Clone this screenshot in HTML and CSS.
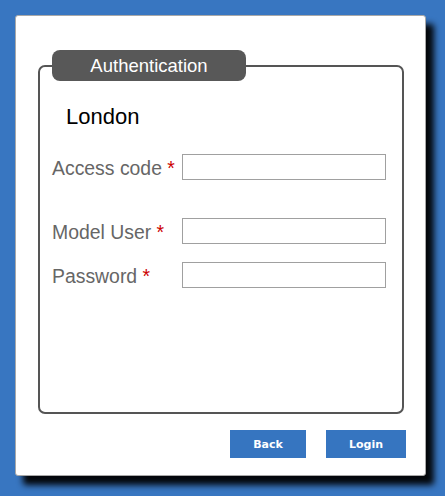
FILE: index.html
```html
<!DOCTYPE html>
<html lang="en">
<head>
<meta charset="utf-8">
<title>Authentication</title>
<link rel="stylesheet" href="styles.css">
</head>
<body>
<div class="card">
  <fieldset class="auth">
    <legend class="auth-title"><span class="auth-title-text">Authentication</span></legend>
    <div class="city">London</div>
    <div class="row row-code">
      <label class="label">Access code <span class="req">*</span></label>
      <input class="field" type="text">
    </div>
    <div class="row row-user">
      <label class="label">Model User <span class="req">*</span></label>
      <input class="field" type="text">
    </div>
    <div class="row">
      <label class="label">Password <span class="req">*</span></label>
      <input class="field" type="password">
    </div>
  </fieldset>
  <div class="actions">
    <button class="btn btn-back" type="button">Back</button>
    <button class="btn btn-login" type="button">Login</button>
  </div>
</div>
</body>
</html>
```

FILE: styles.css
```css
html, body {
  margin: 0;
  height: 100%;
}
body {
  background: #3876c1;
  padding: 15px;
  box-sizing: border-box;
  font-family: "Liberation Sans", Arial, sans-serif;
}
.card {
  width: 411px;
  height: 461px;
  box-sizing: border-box;
  background: #fff;
  border: 1px solid #a8a8a8;
  border-radius: 3px;
  box-shadow: 8px 9px 6px rgba(0, 0, 0, 0.95);
  padding: 34px 19px 0 22px;
  display: flex;
  flex-direction: column;
}
.auth {
  margin: 0;
  width: 366px;
  height: 364px;
  box-sizing: border-box;
  border: 2px solid #555;
  border-radius: 7px;
  padding: 0 16px 0 12px;
  min-inline-size: 0;
}
.auth-title {
  width: 194px;
  height: 31px;
  box-sizing: border-box;
  padding: 0;
  background: #585858;
  color: #fff;
  border-radius: 8px;
  font-size: 18.5px;
  line-height: 31px;
  text-align: left;
}
.auth-title-text {
  display: block;
  text-align: center;
}
.city {
  font-size: 22px;
  line-height: 26px;
  color: #000;
  margin: 23px 0 24px 14px;
}
.row {
  display: flex;
  align-items: center;
  height: 26px;
}
.row-code {
  margin-bottom: 38px;
}
.row-user {
  margin-bottom: 18px;
}
.label {
  width: 130px;
  flex: none;
  font-size: 19.4px;
  color: #666;
  padding-top: 2px;
}
.req {
  color: #c00;
}
.field {
  width: 204px;
  height: 26px;
  box-sizing: border-box;
  margin: 0;
  padding: 0 4px;
  border: 1px solid #a0a0a0;
  border-radius: 0;
  background: #fff;
  outline: none;
}
.actions {
  display: flex;
  justify-content: flex-end;
  gap: 20px;
  margin-top: 16px;
}
.btn {
  height: 28px;
  padding: 0;
  border: none;
  background: #3675c0;
  color: #fff;
  font-family: "DejaVu Sans", Verdana, sans-serif;
  font-weight: bold;
  font-size: 11px;
}
.btn-back {
  width: 76px;
}
.btn-login {
  width: 80px;
}
```
